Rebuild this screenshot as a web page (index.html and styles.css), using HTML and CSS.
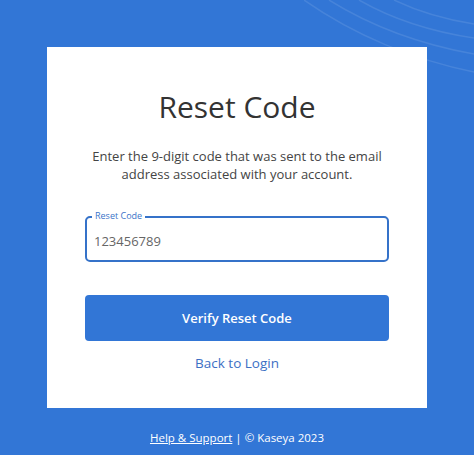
FILE: index.html
```
<!DOCTYPE html>
<html lang="en">
<head>
  <meta charset="UTF-8" />
  <meta name="viewport" content="width=device-width, initial-scale=1.0"/>
  <title>Reset Code</title>
  <link rel="stylesheet" href="styles.css">
</head>
<body>

  <svg class="waves" width="170" height="100" viewBox="0 0 170 100">
    <path d="M0 0 C 50 35, 110 60, 170 72" />
    <path d="M25 0 C 70 28, 120 45, 170 54" />
    <path d="M55 0 C 90 20, 130 32, 170 38" />
    <path d="M90 0 C 115 12, 145 20, 170 24" />
  </svg>

  <div class="container">
    <h1>Reset Code</h1>
    <p class="intro">Enter the 9-digit code that was sent to the email address associated with your account.</p>

    <div class="field">
      <label for="codigo">Reset Code</label>
      <input type="text" id="codigo" value="123456789" />
    </div>

    <button class="btn">Verify Reset Code</button>
    <a class="back" href="#">Back to Login</a>
  </div>

  <div class="footer">
    <a href="#">Help &amp; Support</a> | © Kaseya 2023
  </div>

</body>
</html>
```

FILE: styles.css
```
body {
  font-family: "Open Sans", "Noto Sans", sans-serif;
  background: #3276d6;
  margin: 0;
  width: 100%;
  min-height: 100vh;
  display: flex;
  flex-direction: column;
  align-items: center;
  padding-top: 47px;
  box-sizing: border-box;
  overflow: hidden;
}

.waves {
  position: absolute;
  top: 0;
  right: 0;
}

.waves path {
  fill: none;
  stroke: rgba(255, 255, 255, 0.1);
  stroke-width: 1.5;
}

.container {
  position: relative;
  background-color: #fff;
  width: 380px;
  height: 361px;
  box-sizing: border-box;
  padding: 40px 38px 0;
  display: flex;
  flex-direction: column;
  align-items: center;
}

h1 {
  font-size: 30px;
  font-weight: 400;
  color: #333;
  margin: 0;
  line-height: 40px;
}

.intro {
  font-size: 13px;
  line-height: 18px;
  color: #444;
  text-align: center;
  margin: 20px 0 0;
}

.field {
  position: relative;
  width: 100%;
  margin-top: 33px;
}

.field label {
  position: absolute;
  top: -6px;
  left: 7px;
  background: #fff;
  padding: 0 3px;
  font-size: 9px;
  line-height: 11px;
  color: #3a74c9;
}

.field input {
  width: 100%;
  height: 46px;
  box-sizing: border-box;
  border: 2px solid #3572c9;
  border-radius: 5px;
  padding: 4px 7px 0;
  font-family: inherit;
  font-size: 13px;
  color: #666;
  outline: none;
}

.btn {
  width: 100%;
  height: 46px;
  margin-top: 33px;
  background-color: #3276d6;
  color: #fff;
  border: none;
  border-radius: 4px;
  font-family: inherit;
  font-size: 13px;
  font-weight: 600;
  cursor: pointer;
}

.back {
  margin-top: 13px;
  font-size: 13.5px;
  color: #3c6fc4;
  text-decoration: none;
}

.footer {
  margin-top: 22px;
  font-size: 11.5px;
  color: #fff;
}

.footer a {
  color: #fff;
}
```
